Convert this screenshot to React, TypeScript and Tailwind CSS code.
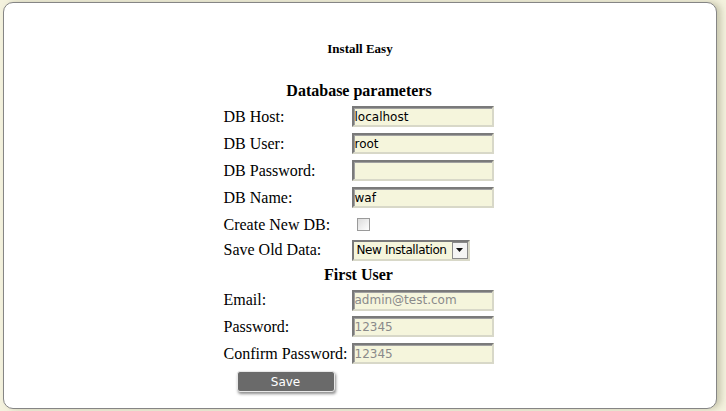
import React from "react";

const serif = { fontFamily: '"Liberation Serif", "Times New Roman", serif' };

function Field({ value, muted }: { value: string; muted?: boolean }) {
  return (
    <div
      className={`w-[142px] h-[21px] bg-[#f5f5dc] border-2 border-t-[#7a7a7a] border-l-[#7a7a7a] border-b-[#d8d8c8] border-r-[#d8d8c8] flex items-center pl-[1px] text-[12px] leading-none ${muted ? "text-[#8a8a8a]" : "text-black"}`}
      style={{ fontFamily: '"DejaVu Sans", Verdana, sans-serif', boxShadow: "inset 1px 1px 0 #a0a0a0" }}
    >
      {value}
    </div>
  );
}

function Row({ label, children, h = 27 }: { label: string; children: React.ReactNode; h?: number }) {
  return (
    <div className="flex items-center" style={{ height: h }}>
      <div className="w-[128px] text-[16px] leading-none text-black" style={serif}>{label}</div>
      <div className="flex items-center">{children}</div>
    </div>
  );
}

export default function App() {
  return (
    <div className="w-[726px] h-[411px] bg-[#f4f2de] overflow-hidden pt-[2px] pl-[3px]">
      <div className="w-[714px] h-[407px] bg-white border border-[#858585] rounded-[10px] shadow-[4px_0_6px_rgba(120,120,90,0.35)] flex flex-col items-center">
        <div className="mt-[37px] h-[18px] flex items-center text-[13px] font-bold text-black" style={serif}>Install Easy</div>
        <div className="mt-[22px] h-[21px] flex items-center text-[16px] font-bold text-black ml-[-2px]" style={serif}>Database parameters</div>
        <div className="w-[270px] ml-[-3px] flex flex-col">
          <div className="h-[2px]" />
          <Row label="DB Host:"><Field value="localhost" /></Row>
          <Row label="DB User:"><Field value="root" /></Row>
          <Row label="DB Password:"><Field value="" /></Row>
          <Row label="DB Name:"><Field value="waf" /></Row>
          <Row label="Create New DB:">
            <div className="ml-[5px] w-[13px] h-[13px] border border-[#9a9a9a] bg-gradient-to-br from-[#dcdcdc] to-white" />
          </Row>
          <Row label="Save Old Data:" h={24}>
            <div
              className="w-[118px] h-[21px] bg-[#f5f5dc] border-2 border-t-[#7a7a7a] border-l-[#7a7a7a] border-b-[#d8d8c8] border-r-[#d8d8c8] flex items-center text-[12px] tracking-[-0.4px] leading-none text-black"
              style={{ fontFamily: '"DejaVu Sans", Verdana, sans-serif' }}
            >
              <span className="flex-1 pl-[3px] whitespace-nowrap overflow-hidden">New Installation</span>
              <span className="w-[16px] h-[17px] shrink-0 bg-[#f4f4f4] border border-[#8a8a8a] flex items-center justify-center">
                <svg width="7" height="4" viewBox="0 0 7 4"><path d="M0 0h7L3.5 4z" fill="#111" /></svg>
              </span>
            </div>
          </Row>
          <div className="h-[25px] flex items-center justify-center text-[16px] font-bold text-black" style={serif}>First User</div>
          <Row label="Email:" h={26}><Field value="admin@test.com" muted /></Row>
          <Row label="Password:"><Field value="12345" muted /></Row>
          <Row label="Confirm Password:"><Field value="12345" muted /></Row>
          <div className="h-[29px] flex items-center">
            <button
              className="ml-[13px] w-[98px] h-[21px] rounded-[3px] bg-[#6a6a6a] text-white text-[12px] leading-none border border-[#e8e8e8] shadow-[1px_2px_3px_rgba(0,0,0,0.45)]"
              style={{ fontFamily: '"DejaVu Sans", Tahoma, sans-serif' }}
            >
              Save
            </button>
          </div>
        </div>
      </div>
    </div>
  );
}
